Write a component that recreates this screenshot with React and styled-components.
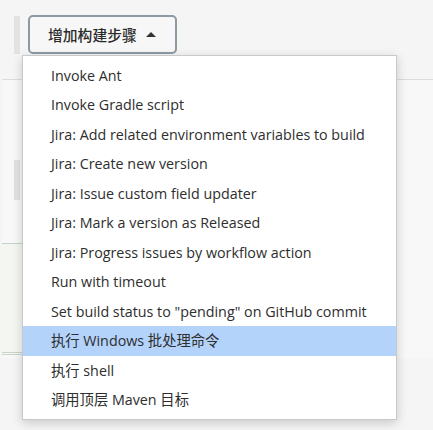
import styled, { createGlobalStyle } from 'styled-components';

const GlobalStyle = createGlobalStyle`
  html, body {
    margin: 0;
    padding: 0;
    background: #f5f5f5;
  }
  body {
    font-family: "Open Sans", "Noto Sans CJK SC", sans-serif;
    color: #333;
  }
`;

const steps = [
  'Invoke Ant',
  'Invoke Gradle script',
  'Jira: Add related environment variables to build',
  'Jira: Create new version',
  'Jira: Issue custom field updater',
  'Jira: Mark a version as Released',
  'Jira: Progress issues by workflow action',
  'Run with timeout',
  'Set build status to "pending" on GitHub commit',
  '执行 Windows 批处理命令',
  '执行 shell',
  '调用顶层 Maven 目标',
];

const App = () => {
  return (
    <Page>
      <GlobalStyle />
      <Toolbar>
        <Handle />
        <DropdownWrap>
          <AddButton>
            增加构建步骤
            <Caret />
          </AddButton>
          <Menu>
            {steps.map((s, i) => (
              <MenuItem key={s} $active={i === 9}>
                {s}
              </MenuItem>
            ))}
          </Menu>
        </DropdownWrap>
      </Toolbar>
      <Section>
        <SectionHandle />
        <GreenPanel />
      </Section>
    </Page>
  );
};

// styles
const Page = styled.div`
  width: 433px;
  height: 430px;
  overflow: hidden;
`;
const Toolbar = styled.div`
  display: flex;
  align-items: flex-start;
  padding: 16px 0 0 14px;
  height: 63px;
  box-sizing: border-box;
`;
const Handle = styled.div`
  width: 6px;
  height: 38px;
  background: #e2e2e2;
  margin-right: 8px;
`;
const DropdownWrap = styled.div`
  position: relative;
`;
const AddButton = styled.button`
  display: flex;
  align-items: center;
  gap: 9px;
  height: 39px;
  margin-top: -1px;
  padding: 0 19px 0 18px;
  border: 2px solid #8d9aa4;
  border-radius: 5px;
  background: #f7f7f7;
  color: #2b2b2b;
  font-family: "Noto Sans CJK SC", sans-serif;
  font-size: 14.8px;
  font-weight: 500;
`;
const Caret = styled.span`
  width: 0;
  height: 0;
  border-left: 5px solid transparent;
  border-right: 5px solid transparent;
  border-bottom: 5px solid #333;
  margin-top: -1px;
`;
const Menu = styled.ul`
  position: absolute;
  top: 39px;
  left: -6px;
  width: 373px;
  margin: 0;
  padding: 4.5px 0;
  list-style: none;
  background: #fff;
  border: 1px solid #c9c9c9;
  box-shadow: 0 3px 10px rgba(0, 0, 0, 0.18);
  z-index: 10;
`;
const MenuItem = styled.li`
  height: 29.5px;
  line-height: 29.5px;
  padding: 0 28px;
  font-size: 14.3px;
  color: #2e2e2e;
  white-space: nowrap;
  background: ${(p) => (p.$active ? '#b3d3fb' : 'transparent')};
`;
const Section = styled.div`
  margin: 16px 0 0 2px;
  border-top: 1px solid #dcdcdc;
  background: #f8f8f8;
  height: 278px;
  position: relative;
  display: flex;
  flex-direction: column;
`;
const SectionHandle = styled.div`
  width: 6px;
  height: 40px;
  background: #e2e2e2;
  margin: 80px 0 0 12px;
`;
const GreenPanel = styled.div`
  margin-top: 43px;
  width: 300px;
  height: 108px;
  background: #f4f7f1;
  border-top: 1px solid #c3d6c6;
  border-bottom: 3px double #c9d4cc;
`;

export default App;
